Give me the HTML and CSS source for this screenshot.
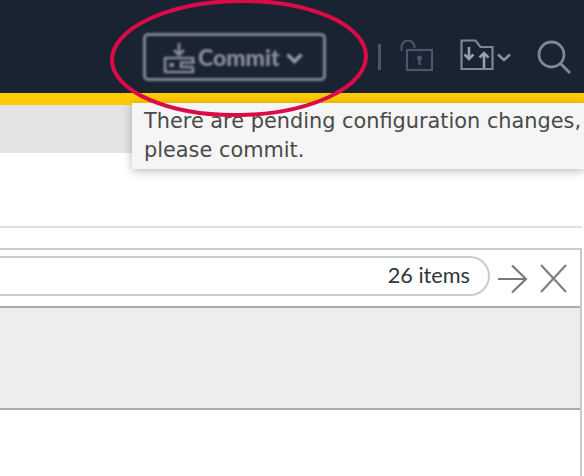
FILE: index.html
```html
<!DOCTYPE html>
<html lang="en">
<head>
<meta charset="utf-8">
<title>Commit</title>
<link rel="stylesheet" href="styles.css">
</head>
<body>
<header class="topbar">
  <button class="commit" type="button">
    <svg class="commit-icon" viewBox="0 0 32 32" width="32" height="32" fill="none" stroke="#858c9a" stroke-width="2.6">
      <path d="M16 1v11M11 8l5 5 5-5"/>
      <path d="M30 20V16H2v14h28v-5"/>
      <rect x="6.500" y="21" width="4.500" height="4" fill="#858c9a" stroke="none"/>
      <path d="M32 20.500H18v4.500h12"/>
    </svg>
    <span class="commit-label">Commit</span>
    <svg class="chevron" viewBox="0 0 17 11" width="17" height="11" fill="none" stroke="#959ba8" stroke-width="3.6"><path d="M1.500 1.500L8.500 8.500l7-7"/></svg>
  </button>
  <span class="divider"></span>
  <svg class="lock" viewBox="0 0 34 32" width="34" height="32" fill="none" stroke="#4a5867" stroke-width="2.2">
    <path d="M1.500 11V7a6.500 6.500 0 0 1 13 0v1"/>
    <rect x="7" y="10" width="25" height="20"/>
    <circle cx="19.500" cy="18" r="2.500" fill="#4a5867" stroke="none"/>
    <path d="M19.500 18v7" stroke-width="2.400"/>
  </svg>
  <svg class="folder" viewBox="0 0 34 32" width="34" height="32" fill="none" stroke="#7f8795" stroke-width="2.200">
    <path d="M1.500 1.500h14l5 6.500h12v22h-31z"/>
    <path d="M9 8v12M4.500 15.500L9 20l4.500-4.500" stroke="#98a0ac" stroke-width="2.600"/>
    <path d="M24 29V14M19.500 18.500L24 14l4.500 4.500" stroke="#98a0ac" stroke-width="2.600"/>
  </svg>
  <svg class="chevron-small" viewBox="0 0 14 9" width="14" height="9" fill="none" stroke="#8a919e" stroke-width="2.600"><path d="M1 1.500l6 5.500 6-5.500"/></svg>
  <svg class="search" viewBox="0 0 34 34" width="34" height="34" fill="none" stroke="#7f8795" stroke-width="2.800">
    <circle cx="14.500" cy="14.500" r="12.500"/>
    <path d="M23.500 23.500L33 33" stroke-width="3"/>
  </svg>
</header>
<div class="accent"></div>
<div class="subbar"></div>
<main class="content">
  <div class="section-line"></div>
  <section class="panel">
    <div class="toolbar">
      <div class="pill"><span>26 items</span></div>
      <svg class="arrow" viewBox="0 0 31 30" width="31" height="30" fill="none" stroke="#77797b" stroke-width="2.200"><path d="M1 15h28M15 1.500L29 15 15 28.500"/></svg>
      <svg class="close" viewBox="0 0 27 29" width="27" height="29" fill="none" stroke="#7d7f81" stroke-width="2.200"><path d="M1 1l25 27M26 1L1 28"/></svg>
    </div>
    <div class="band"></div>
  </section>
</main>
<div class="tooltip">There are pending configuration changes, please commit.</div>
<svg class="annotation" viewBox="0 0 584 130" width="584" height="130" fill="none">
  <ellipse cx="239" cy="58" rx="127" ry="57" transform="rotate(-1 239 58)" stroke="#dc0a47" stroke-width="4"/>
</svg>
</body>
</html>
```

FILE: styles.css
```css
* {
  box-sizing: border-box;
}

html,
body {
  margin: 0;
  height: 476px;
  overflow: hidden;
  background: #fff;
}

body {
  position: relative;
  display: flex;
  flex-direction: column;
  font-family: "DejaVu Sans", "Open Sans", sans-serif;
}

.topbar {
  height: 93px;
  flex: none;
  display: flex;
  align-items: flex-start;
  padding: 33px 0 0 143px;
  background: #1a2332;
}

.commit {
  width: 183px;
  height: 48px;
  display: flex;
  align-items: center;
  padding: 0 0 0 17px;
  background: transparent;
  border: 3px solid #7f8695;
  border-radius: 5px;
  filter: blur(0.9px);
}

.commit-icon {
  margin-top: 2px;
}

.commit-label {
  margin-left: 3px;
  font: 900 23px/1 "Lato", sans-serif;
  color: #8b92a0;
}

.chevron {
  margin: 3px 0 0 6px;
}

.divider {
  width: 3px;
  height: 26px;
  margin: 11px 0 0 52px;
  background: #4b5766;
}

.lock {
  margin: 7px 0 0 19px;
  filter: blur(0.7px);
}

.folder {
  margin: 6px 0 0 26px;
  filter: blur(0.7px);
}

.chevron-small {
  margin: 20px 0 0 3px;
  filter: blur(0.7px);
}

.search {
  margin: 7px 0 0 26px;
  filter: blur(0.7px);
}

.accent {
  height: 12px;
  flex: none;
  background: #fdca03;
}

.subbar {
  height: 48px;
  flex: none;
  background: #e2e3e5;
}

.content {
  flex: 1;
  display: flex;
  flex-direction: column;
  padding: 73px 2px 0 0;
}

.section-line {
  height: 2px;
  flex: none;
  background: #e0e0e0;
}

.panel {
  flex: 1;
  margin-top: 20px;
  border-top: 2px solid #c8cbce;
  border-right: 2px solid #c8cbce;
}

.toolbar {
  height: 56px;
  display: flex;
  align-items: flex-start;
  padding-top: 6px;
}

.pill {
  width: 490px;
  height: 40px;
  display: flex;
  align-items: center;
  justify-content: flex-end;
  padding-right: 18px;
  border: 2px solid #c8cbcd;
  border-left: 0;
  border-radius: 0 20px 20px 0;
  font: 400 21.700px/1 "Lato", sans-serif;
  color: #2f3540;
}

.arrow {
  margin: 8px 0 0 7px;
  filter: blur(0.4px);
}

.close {
  margin: 8px 0 0 12px;
  filter: blur(0.4px);
}

.band {
  height: 104px;
  background: #ecedec;
  border-top: 2px solid #a8acaf;
  border-bottom: 2px solid #a8acaf;
}

.tooltip {
  position: absolute;
  top: 103px;
  left: 132px;
  right: 0;
  height: 66px;
  padding: 4px 0 0 12px;
  background: #f5f5f5;
  box-shadow: 0 2px 9px rgba(0, 0, 0, 0.28);
  font-size: 20.850px;
  line-height: 29px;
  color: #4a4a4a;
}

.annotation {
  position: absolute;
  top: 0;
  left: 0;
}
```
